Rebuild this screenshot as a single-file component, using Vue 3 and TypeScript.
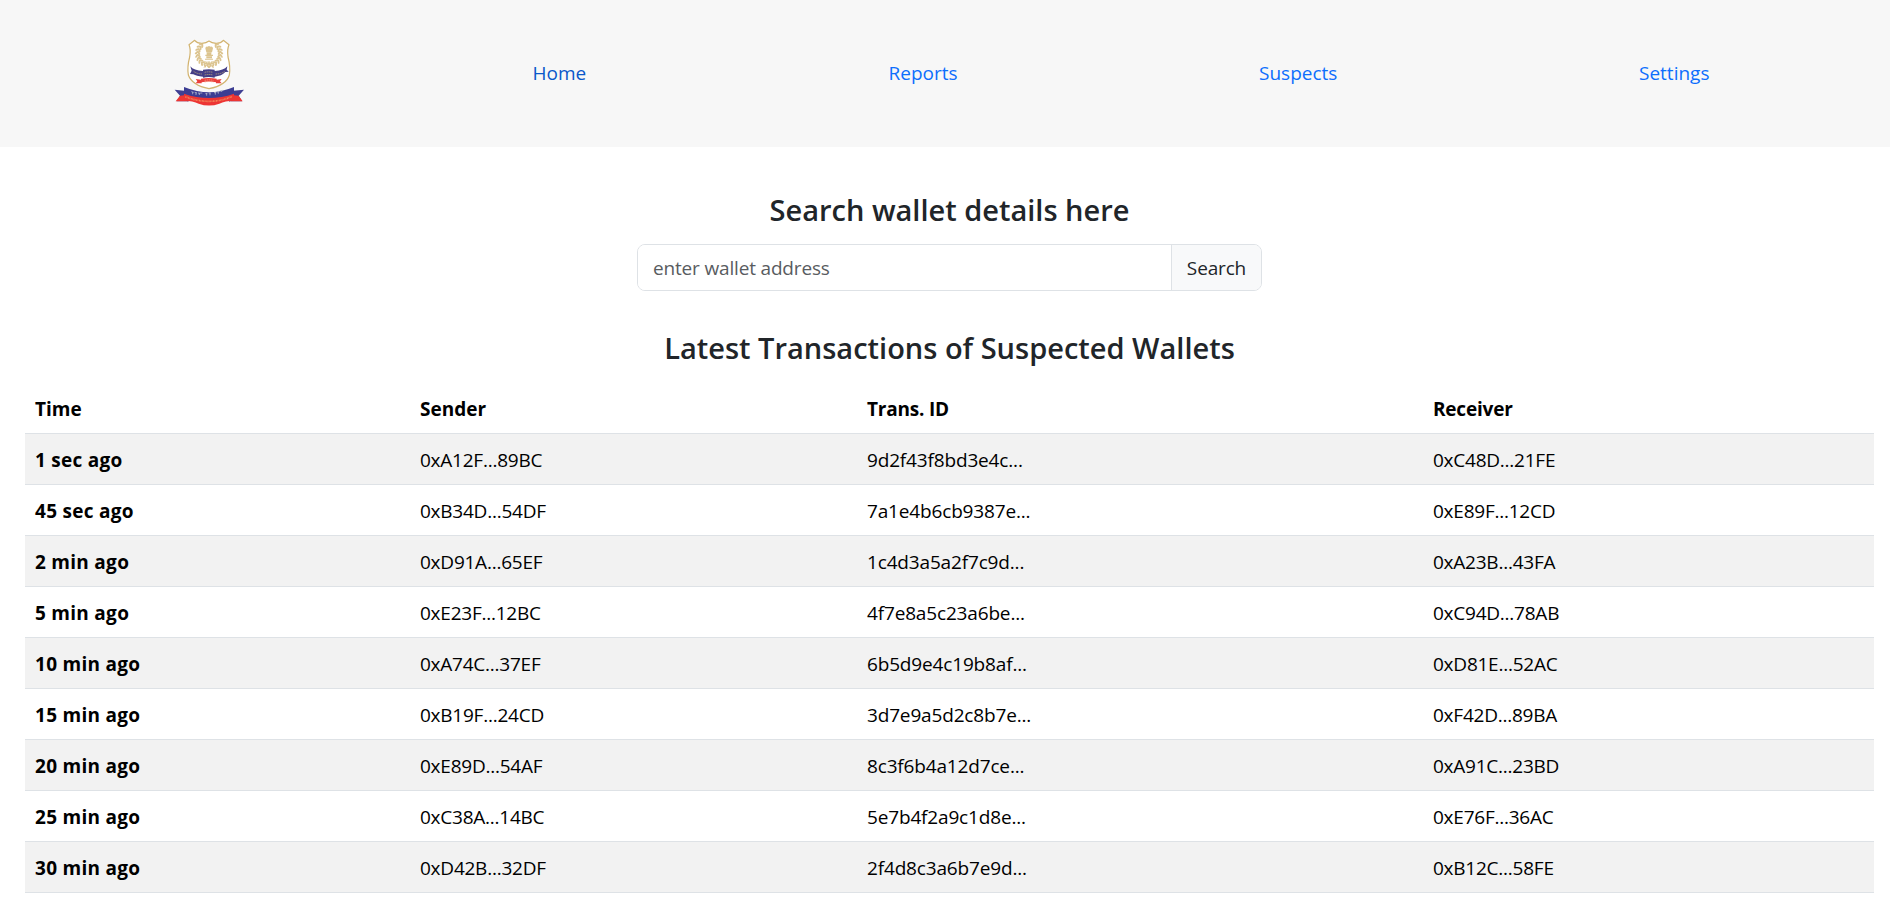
<script setup lang="ts">
import { ref } from 'vue'

interface Transaction {
  time: string
  sender: string
  id: string
  receiver: string
}

const links = ['Home', 'Reports', 'Suspects', 'Settings']
const address = ref('')

const transactions: Transaction[] = [
  { time: '1 sec ago', sender: '0xA12F...89BC', id: '9d2f43f8bd3e4c...', receiver: '0xC48D...21FE' },
  { time: '45 sec ago', sender: '0xB34D...54DF', id: '7a1e4b6cb9387e...', receiver: '0xE89F...12CD' },
  { time: '2 min ago', sender: '0xD91A...65EF', id: '1c4d3a5a2f7c9d...', receiver: '0xA23B...43FA' },
  { time: '5 min ago', sender: '0xE23F...12BC', id: '4f7e8a5c23a6be...', receiver: '0xC94D...78AB' },
  { time: '10 min ago', sender: '0xA74C...37EF', id: '6b5d9e4c19b8af...', receiver: '0xD81E...52AC' },
  { time: '15 min ago', sender: '0xB19F...24CD', id: '3d7e9a5d2c8b7e...', receiver: '0xF42D...89BA' },
  { time: '20 min ago', sender: '0xE89D...54AF', id: '8c3f6b4a12d7ce...', receiver: '0xA91C...23BD' },
  { time: '25 min ago', sender: '0xC38A...14BC', id: '5e7b4f2a9c1d8e...', receiver: '0xE76F...36AC' },
  { time: '30 min ago', sender: '0xD42B...32DF', id: '2f4d8c3a6b7e9d...', receiver: '0xB12C...58FE' },
]

// Leaves of the laurel wreath, mirrored around the centre line.
const leaves = Array.from({ length: 10 }, (_, i) => {
  const a = ((98 + i * 15) * Math.PI) / 180
  return {
    x: 147 + 34 * Math.cos(a),
    y: 86 + 34 * Math.sin(a),
    r: 98 + i * 15,
  }
})
</script>

<template>
  <div class="page">
    <nav class="nav">
      <svg class="logo" viewBox="0 0 300 285" aria-hidden="true">
        <path
          d="M104 46 Q113 56 126 55 Q139 54 147 48 Q155 54 168 55 Q181 56 190 46 L207 59 Q201 72 204 96 Q212 126 208 150 Q199 181 147 191 Q96 181 85 150 Q81 126 89 96 Q93 72 87 59 Z"
          fill="#fff" stroke="#d2b36f" stroke-width="3.6" stroke-linejoin="round"
        />
        <g fill="#dcc48f">
          <g v-for="side in [1, -1]" :key="side" :transform="side === 1 ? '' : 'translate(294 0) scale(-1 1)'">
            <g v-for="(leaf, i) in leaves" :key="i" :transform="`translate(${leaf.x} ${leaf.y}) rotate(${leaf.r})`">
              <ellipse cx="-4" cy="1" rx="6.5" ry="3" transform="rotate(48)" />
              <ellipse cx="4" cy="1" rx="6.5" ry="3" transform="rotate(-48)" />
            </g>
          </g>
          <path d="M136 70 Q137 63 143 65 Q147 61 151 65 Q158 63 159 70 L156 82 H139Z" />
          <path d="M140 82h14v7h-14zM136 89h23v4h-23zM139 94h17v6h-17zM135 101h24v3h-24z" />
          <path d="M134 109h6v3h-6zM142 109h8v3h-8zM153 109h7v3h-7z" opacity=".7" />
        </g>
        <path d="M132 128l13-13 16 13M133 157l-4-9M161 157l4-9" fill="none" stroke="#dbc38f" stroke-width="3" />
        <path
          d="M91 124Q101 137 129 138V134Q146 131 164 134V138Q191 137 202 124L200 134L206 140L196 141Q185 153 164 155V158Q146 154 129 158V155Q109 153 100 148L90 147L95 137Z"
          fill="#443e86"
        />
        <path d="M101 139q10 8 25 8M167 147q17 0 27-8M134 142q12-3 25 0M134 150q12-3 25 0" fill="none" stroke="#a9967d" stroke-width="3" stroke-dasharray="4 2" />
        <path d="M107 162l16 2v-3q24-4 47 0v3l15-2-5 7 5 6h-17v-3q-21-5-43 0v3h-18l5-6z" fill="#eb3f3c" />
        <path d="M134 166q13-3 26 0M134 171q13-3 26 0" fill="none" stroke="#f3a184" stroke-width="2.5" stroke-dasharray="4 2" />
        <path d="M44 194L73 197V218L82 229H50L60 212Z" fill="#3f3f93" />
        <path d="M252 194L220 197V218L212 229H246L236 212Z" fill="#3f3f93" />
        <path d="M60 212L72 211L82 229H47ZM236 212L222 211L212 229H248Z" fill="#ed3634" />
        <path d="M72 216l13 3v12l-13-9zM222 216l-14 3v12l14-9z" fill="#7b2555" />
        <path d="M72 186Q112 202 147 202Q183 202 222 186V209Q185 224 147 224Q110 224 72 209Z" fill="#3c3d93" />
        <path d="M72 206Q110 219 147 219Q185 219 222 206V227Q195 227 178 236Q147 247 116 236Q99 227 72 227Z" fill="#ed3534" />
        <path
          d="M94 200l7 2m-3-1v7m6-6l7 2m-3-2v8m6-6l7 1m-3-1v6m3-6l6 0m9 2l6 0m-2-2v8m6-8l6 0m-2 0v7m12-8l7-1m-3 0v7m5-8l7-2m-3 1v6m5-8l7-2m-2 0v5"
          fill="none" stroke="#b4b7cb" stroke-width="2.4"
        />
        <path d="M76 215Q111 229 147 229Q184 229 217 214" fill="none" stroke="#f18b5c" stroke-width="5" stroke-dasharray="3 1.5 2 2" />
      </svg>
      <a v-for="link in links" :key="link" href="#" class="link" :class="{ active: link === 'Home' }" @click.prevent>{{ link }}</a>
    </nav>

    <main class="content">
      <h3 class="title search-title">Search wallet details here</h3>
      <form class="search" @submit.prevent>
        <input v-model="address" class="field" type="text" placeholder="enter wallet address" />
        <button class="button" type="submit">Search</button>
      </form>
      <h3 class="title table-title">Latest Transactions of Suspected Wallets</h3>
      <table class="table">
        <colgroup>
          <col class="col-time" />
          <col class="col-sender" />
          <col class="col-id" />
          <col />
        </colgroup>
        <thead>
          <tr>
            <th>Time</th>
            <th>Sender</th>
            <th>Trans. ID</th>
            <th>Receiver</th>
          </tr>
        </thead>
        <tbody>
          <tr v-for="row in transactions" :key="row.id">
            <th>{{ row.time }}</th>
            <td>{{ row.sender }}</td>
            <td class="id">{{ row.id }}</td>
            <td>{{ row.receiver }}</td>
          </tr>
        </tbody>
      </table>
    </main>
  </div>
</template>

<style>
body {
  margin: 0;
  background: #fff;
}
</style>

<style scoped>
.page {
  height: 898px;
  overflow: hidden;
  font-family: 'Open Sans', 'Noto Sans', sans-serif;
  font-size: 19px;
  line-height: 30px;
  color: #212529;
}

.nav {
  display: grid;
  grid-template-columns: 372.5px 356px 370.5px 380px auto;
  align-items: center;
  box-sizing: border-box;
  height: 147px;
  padding: 0 0 2px 160px;
  background: #f7f7f7;
}

.logo {
  width: 100px;
  height: 95px;
}

.link {
  justify-self: start;
  color: #0d6efd;
  text-decoration: none;
}

.link.active {
  color: #0a58ca;
}

.content {
  padding: 45px 16px 0 25px;
}

.title {
  margin: 0;
  font-size: 29px;
  font-weight: 600;
  line-height: 36px;
  text-align: center;
}

.search {
  display: flex;
  box-sizing: border-box;
  width: 625px;
  height: 47px;
  margin: 16px auto 0;
  overflow: hidden;
  border: 1px solid #dee2e6;
  border-radius: 8px;
}

.field {
  flex: 1;
  min-width: 0;
  padding: 0 15px;
  border: 0;
  outline: 0;
  font: inherit;
  letter-spacing: -0.17px;
  color: inherit;
  background: #fff;
}

.field::placeholder {
  color: #595c5f;
  opacity: 1;
}

.button {
  width: 90px;
  padding: 0;
  border: 0;
  border-left: 1px solid #dee2e6;
  font: inherit;
  letter-spacing: -0.15px;
  color: #212529;
  background: #f8f9fa;
}

.table-title {
  margin-top: 39px;
}

.table {
  width: 100%;
  margin-top: 17px;
  border-collapse: separate;
  border-spacing: 0;
  table-layout: fixed;
  color: #000;
}

.col-time {
  width: 385px;
}

.col-sender {
  width: 447px;
}

.col-id {
  width: 566px;
}

.table th,
.table td {
  box-sizing: border-box;
  height: 51px;
  padding: 2px 10px 0;
  border-bottom: 1px solid #dee2e6;
  text-align: left;
  white-space: nowrap;
}

.table td {
  letter-spacing: -0.24px;
}

.table td.id {
  letter-spacing: -0.16px;
}

.table th {
  font-weight: 700;
}

.table thead th:nth-child(n + 3) {
  letter-spacing: -0.2px;
}

.table tbody th {
  letter-spacing: 0.28px;
}

.table tbody tr:nth-child(odd) > * {
  background: #f2f2f2;
}
</style>
